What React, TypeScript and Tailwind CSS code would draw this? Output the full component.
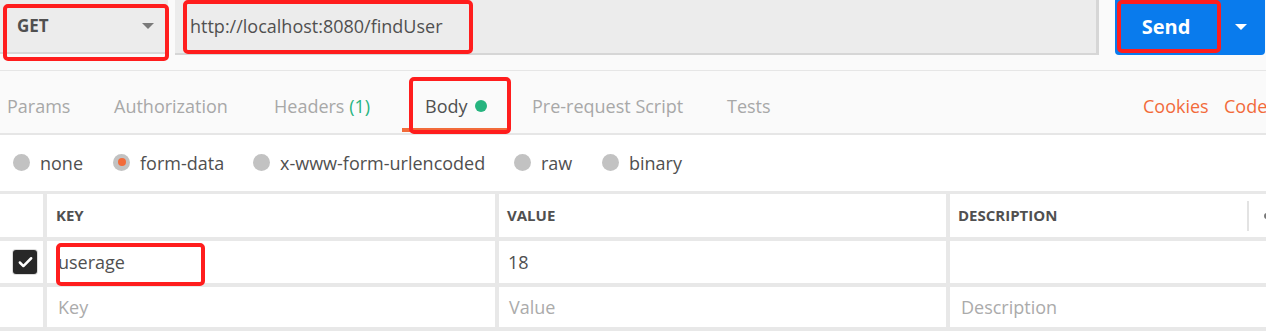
import { Check } from "lucide-react";

const tabs = [
  { label: "Params", w: "w-[107px]" },
  { label: "Authorization", w: "w-[160px]" },
];

const radios = [
  { label: "none", w: "w-[100px]", on: false },
  { label: "form-data", w: "w-[140px]", on: true },
  { label: "x-www-form-urlencoded", w: "w-[261px]", on: false },
  { label: "raw", w: "w-[88px]", on: false },
  { label: "binary", w: "w-[100px]", on: false },
];

const RedBox = ({ className }: { className: string }) => (
  <div className={`absolute border-[4px] border-[#ff1d1d] rounded-[5px] pointer-events-none ${className}`} />
);

export default function App() {
  return (
    <div className="relative w-[1266px] h-[331px] overflow-hidden bg-[#fafafa] font-['Open_Sans',sans-serif] text-[#505050]">
      {/* request bar */}
      <div className="flex h-[55px]">
        <div className="flex items-center justify-between w-[168px] h-[54px] bg-[#ececec] border-b-2 border-[#d8d8d8] pl-[17px] pr-[14px]">
          <span className="text-[17px] font-bold">GET</span>
          <span className="w-0 h-0 border-l-[6px] border-r-[6px] border-t-[6px] border-l-transparent border-r-transparent border-t-[#7a7a7a]" />
        </div>
        <div className="flex items-center ml-[7px] w-[924px] h-[55px] bg-[#ececec] border-r-[3px] border-b-2 border-[#d6d6d6] pl-[15px]">
          <span className="text-[18px]">http://localhost:8080/findUser</span>
        </div>
        <div className="flex ml-[16px] w-[150px] h-[55px] bg-[#097bed] rounded-b-[4px]">
          <div className="flex items-center justify-center w-[102px] pb-[2px]">
            <span className="text-[20px] font-bold text-white">Send</span>
          </div>
          <div className="flex items-center justify-center flex-1 pb-[2px]">
            <span className="w-0 h-0 border-l-[6px] border-r-[6px] border-t-[6px] border-l-transparent border-r-transparent border-t-white" />
          </div>
        </div>
      </div>

      {/* tabs */}
      <div className="mt-[15px] border-t border-b-2 border-[#e6e6e6]">
        <div className="flex items-center h-[62px] pt-[8px] text-[18px] whitespace-nowrap">
          <div className="w-[7px] shrink-0" />
          {tabs.map((t) => (
            <div key={t.label} className={`${t.w} shrink-0 text-[#a8a8a8]`}>
              {t.label}
            </div>
          ))}
          <div className="w-[151px] shrink-0 text-[#a8a8a8]">
            Headers <span className="text-[#26b47f]">(1)</span>
          </div>
          <div className="relative flex items-center w-[107px] h-full shrink-0">
            <span>Body</span>
            <span className="ml-[7px] w-[12px] h-[12px] rounded-full bg-[#26b47f]" />
            <span className="absolute left-[-23px] bottom-[1px] w-[106px] h-[4px] bg-[#f26b3a]" />
          </div>
          <div className="w-[195px] shrink-0 text-[#a8a8a8]">Pre-request Script</div>
          <div className="w-[416px] shrink-0 text-[#a8a8a8]">Tests</div>
          <div className="w-[81px] shrink-0 text-[#f26b3a]">Cookies</div>
          <div className="shrink-0 text-[#f26b3a]">Code</div>
        </div>
      </div>

      {/* body type radios */}
      <div className="flex items-center h-[56px] bg-white pl-[13px] text-[18px] whitespace-nowrap">
        {radios.map((r) => (
          <div key={r.label} className={`${r.w} shrink-0 flex items-center`}>
            <span className="flex items-center justify-center w-[17px] h-[17px] rounded-full bg-[#c2c2c2] mb-[2px]">
              {r.on && <span className="w-[8px] h-[8px] rounded-full bg-[#f26b3a]" />}
            </span>
            <span className="ml-[10px]">{r.label}</span>
          </div>
        ))}
      </div>

      {/* key/value table */}
      <div className="grid grid-cols-[43px_448px_447px_316px] grid-rows-[43px_42px_40px] gap-[4px] bg-[#e8e8e8] pt-[3px] pb-[4px] whitespace-nowrap">
        <div className="bg-white" />
        <div className="flex items-center bg-white pl-[9px] text-[15px] font-bold">KEY</div>
        <div className="flex items-center bg-white pl-[8px] text-[15px] font-bold">VALUE</div>
        <div className="flex items-center bg-white pl-[8px] text-[15px] font-bold overflow-hidden">
          <span>DESCRIPTION</span>
          <span className="ml-auto w-[2px] h-[30px] bg-[#e3e3e3] shrink-0" />
          <span className="ml-[15px] mr-[-4px] w-[6px] h-[6px] rounded-full bg-[#777] shrink-0" />
        </div>

        <div className="flex items-center bg-white pl-[13px]">
          <span className="flex items-center justify-center w-[24px] h-[24px] rounded-[3px] bg-[#282828] ring-1 ring-[#dcdcdc]">
            <Check size={17} strokeWidth={3.5} color="white" />
          </span>
        </div>
        <div className="flex items-center bg-white pl-[11px] text-[18px]">userage</div>
        <div className="flex items-center bg-white pl-[9px] text-[18px]">18</div>
        <div className="bg-white" />

        <div className="bg-white" />
        <div className="flex items-center bg-white pl-[11px] text-[18px] text-[#ababab]">Key</div>
        <div className="flex items-center bg-white pl-[10px] text-[18px] text-[#ababab]">Value</div>
        <div className="flex items-center bg-white pl-[11px] text-[18px] text-[#ababab]">Description</div>
      </div>

      {/* annotation boxes */}
      <RedBox className="left-[3px] top-[4px] w-[166px] h-[57px]" />
      <RedBox className="left-[183px] top-[0px] w-[290px] h-[54px]" />
      <RedBox className="left-[1117px] top-[0px] w-[104px] h-[53px]" />
      <RedBox className="left-[409px] top-[77px] w-[102px] h-[57px]" />
      <RedBox className="left-[56px] top-[243px] w-[149px] h-[43px]" />
    </div>
  );
}
